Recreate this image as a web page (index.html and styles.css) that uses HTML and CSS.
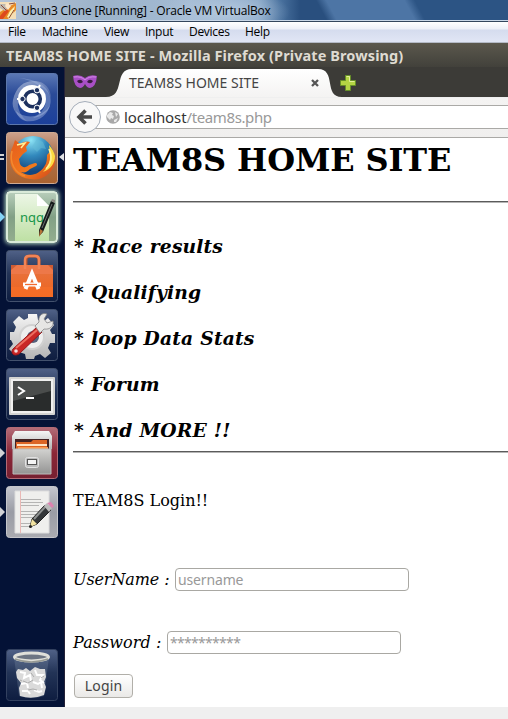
FILE: index.html
```html
<!DOCTYPE html>
<html lang="en">
<head>
<meta charset="utf-8">
<title>TEAM8S HOME SITE</title>
<link rel="stylesheet" href="styles.css">
</head>
<body>
<header class="vm-title">
  <svg class="vm-icon" width="16" height="17" viewBox="0 0 16 17"><rect width="16" height="17" fill="#f4dfb8"/><path d="M0 17V10L8 5l8-4v7L8 17z" fill="#e88a25"/><path d="M0 14l6-7 3 2-6 8H0z" fill="#dd491c"/><path d="M7 15l3-6 5-5-2 8-4 4z" fill="#fff0ad"/><path d="M0 2h5l3 4-3 3-5-3z" fill="#bdb8ae"/><path d="M1 3l5 5M9 2l6-1M14 8l-5 8" stroke="#8a4937" fill="none"/><path d="M7 1l4 3-3 4-3-4z" fill="#ffe7c7"/></svg>
  <span class="vm-name">Ubun3 Clone [Running] - Oracle VM VirtualBox</span>
</header>
<nav class="vm-menu"><span class="m-file">File</span><span class="m-machine">Machine</span><span class="m-view">View</span><span class="m-input">Input</span><span class="m-devices">Devices</span><span class="m-help">Help</span></nav>
<div class="window-title"><span>TEAM8S HOME SITE - Mozilla Firefox (Private Browsing)</span></div>
<div class="desktop">
  <aside class="launcher">
    <svg width="0" height="0" class="defs"><defs>
      <linearGradient id="navy" x2="0" y2="1"><stop stop-color="#506187"/><stop offset=".45" stop-color="#233457"/><stop offset="1" stop-color="#0e1d40"/></linearGradient>
      <linearGradient id="blue" x2="0" y2="1"><stop stop-color="#5c79b6"/><stop offset=".4" stop-color="#2b4b98"/><stop offset="1" stop-color="#1c409b"/></linearGradient>
      <linearGradient id="brown" x2="0" y2="1"><stop stop-color="#cda18c"/><stop offset=".4" stop-color="#ae7450"/><stop offset="1" stop-color="#a9622f"/></linearGradient>
      <linearGradient id="green" x2="0" y2="1"><stop stop-color="#b8cebb"/><stop offset=".5" stop-color="#81a085"/><stop offset="1" stop-color="#93ae8e"/></linearGradient>
      <linearGradient id="red" x2="0" y2="1"><stop stop-color="#b36c78"/><stop offset=".5" stop-color="#8c2637"/><stop offset="1" stop-color="#762031"/></linearGradient>
      <linearGradient id="gray" x2="0" y2="1"><stop stop-color="#c4c6ce"/><stop offset=".5" stop-color="#9a9ca5"/><stop offset="1" stop-color="#aaabb1"/></linearGradient>
      <linearGradient id="paper" x2="0" y2="1"><stop stop-color="#ecf6e6"/><stop offset="1" stop-color="#bee0a4"/></linearGradient>
      <linearGradient id="bag" x2="0" y2="1"><stop stop-color="#e77443"/><stop offset="1" stop-color="#ed641e"/></linearGradient>
      <linearGradient id="steel" x2="0" y2="1"><stop stop-color="#f5f5f5"/><stop offset="1" stop-color="#b4b4b4"/></linearGradient>
      <linearGradient id="drawer" x2="0" y2="1"><stop stop-color="#d2d2d0"/><stop offset="1" stop-color="#949493"/></linearGradient>
      <radialGradient id="globe" cx=".45" cy=".1" r=".75"><stop stop-color="#8de4f5"/><stop offset=".5" stop-color="#3289bd"/><stop offset="1" stop-color="#16467d"/></radialGradient>
      <linearGradient id="fox" x2="1" y2="1"><stop stop-color="#e55b1d"/><stop offset=".6" stop-color="#f27a1c"/><stop offset="1" stop-color="#cc411c"/></linearGradient>
      <linearGradient id="swirl" x2="1" y2="1"><stop stop-color="#fff" stop-opacity=".6"/><stop offset="1" stop-color="#fff" stop-opacity=".03"/></linearGradient>
    </defs></svg>
    <div class="tile"><svg viewBox="0 0 52 52"><rect x=".5" y=".5" width="51" height="51" rx="3" fill="url(#blue)" stroke="#5c77ac"/><path d="M7 27C10 13 19 7 30 8c9 1 15 8 15 17-4-9-12-14-21-12C16 15 12 20 12 29c-1 8 4 15 10 20C11 44 5 36 7 27z" fill="url(#swirl)" opacity=".7"/><path d="M13 5c14 1 27 5 31 18 3 11-4 20-17 22 9-5 13-11 13-19C39 14 27 7 13 5z" fill="#9cb2dd" opacity=".45"/><path d="M10 38c8 8 26 8 34-6-2 10-12 18-24 16-5-1-9-5-10-10z" fill="#b5c4e5" opacity=".4"/><circle cx="26" cy="26" r="14" fill="#fff"/><circle cx="26.500" cy="26" r="7.800" fill="none" stroke="#1d315f" stroke-width="3.600"/><path d="M18 26h-7M30 19l4-7M30 33l4 7" stroke="#fff" stroke-width="2"/><g fill="#1d315f" stroke="#fff"><circle cx="16.500" cy="26" r="2.700"/><circle cx="31" cy="17.200" r="2.700"/><circle cx="31" cy="34.800" r="2.700"/></g></svg></div>
    <div class="tile"><svg viewBox="0 0 52 52"><rect x=".5" y=".5" width="51" height="51" rx="3" fill="url(#brown)" stroke="#cfaa92"/><circle cx="27" cy="25" r="21" fill="url(#globe)"/><path d="M31 7l6 3 3 7-5-1-4 4-5-5z" fill="#66bdd7" opacity=".5"/><path d="M7 14l2-6 5 4c4-3 8-3 10-2l-4 5 1 4-4 3-4 5 1 5c2 4 6 4 9 1l6-2c2 0 3 2 1 3l-6 3c-3 3-5 4-9 3 9 6 18 2 23-5 3-4 3-8 3-12l5-6 1 4c3 6 2 10 1 13C44 43 35 49 24 47 12 46 4 37 4 27c0-6 1-9 3-13z" fill="url(#fox)"/><path d="M41 14c5 9 4 18-4 26 8-3 12-9 12-16-1-4-3-8-6-11l1 8z" fill="#ffdb42"/><path d="M43 17c4 9 2 15-3 20M11 13l8-2-4 5" fill="none" stroke="#fff097" stroke-width="1.500"/><path d="M6 19c-3 12 3 22 13 25" stroke="#f18a31" stroke-width="1.500" fill="none"/></svg><i class="pip pip-up"></i><i class="pip pip-down"></i><i class="active-arrow"></i></div>
    <div class="tile glow"><svg viewBox="0 0 52 52"><rect x="1" y="1" width="50" height="50" rx="3" fill="url(#green)" stroke="#d9ead9" stroke-width="2"/><path d="M9 3h22l12 12v35H9z" fill="url(#paper)"/><path d="M31 3v12h12z" fill="#fff"/><text x="14" y="31" class="note-text">nqq</text><path d="M45 10l4 2-12 29-4 4 0-6z" fill="#161b1b"/><path d="M45 10l1-2 3 1v3z" fill="#8b8781"/><path d="M34 38l3 2-4 6z" fill="#b67538"/><path d="M46 13L36 37" stroke="#6b706e"/></svg><i class="run-arrow blue-arrow"></i></div>
    <div class="tile"><svg viewBox="0 0 52 52"><rect x=".5" y=".5" width="51" height="51" rx="3" fill="url(#navy)" stroke="#43516d"/><path d="M20 19V10q0-4 4-4h5q4 0 4 4v9" fill="none" stroke="#b6532f" stroke-width="3"/><path d="M5 15h42v32H5z" fill="url(#bag)"/><path d="M5 15h42v6H5z" fill="#ce5c34"/><path d="M5 20l6-5h31l5 5v4H5z" fill="#ed7849"/><path d="M19 19V10q0-4 4-4h6q4 0 4 4v9" fill="none" stroke="#f18455" stroke-width="2.500"/><path d="M5 37h42v10H5z" fill="#fa712a" opacity=".55"/><path d="M19.500 39L26 23.500 32.500 39" fill="none" stroke="#fff" stroke-width="4"/><path d="M17 34.500h18" stroke="#fff" stroke-width="4"/><path d="M19 34.500h12" stroke="#f26b30" stroke-width="1.300"/></svg></div>
    <div class="tile"><svg viewBox="0 0 52 52"><rect x=".5" y=".5" width="51" height="51" rx="3" fill="url(#navy)" stroke="#43516d"/><path d="M22 5h9l1 6 5 2 5-4 6 7-4 5 2 4h3v9h-5l-2 5 3 5-6 5-5-4-5 2-1 3h-8l-1-5-6-2-4 3-6-6 4-5-2-4H4v-8h4l2-5-3-5 6-6 5 4 4-2z" fill="url(#steel)"/><circle cx="26" cy="28" r="12" fill="#eee" stroke="#d1d1d1" stroke-width="2"/><circle cx="27" cy="28" r="6" fill="#55617b"/><path d="M7 40L31 18l5 5L13 45c-5 3-9-1-6-5z" fill="#c92726" stroke="#98161a"/><path d="M10 39l21-18" stroke="#ed6e60" stroke-width="2"/><circle cx="10" cy="42" r="1.800" fill="#f6dddd"/><path d="M29 17l4-4c-1-6 3-10 8-8l-3 5 3 4 6-2c1 5-3 9-9 8l-4 4z" fill="#e6e6e4" stroke="#888" stroke-width=".8"/></svg></div>
    <div class="tile"><svg viewBox="0 0 52 52"><rect x=".5" y=".5" width="51" height="51" rx="3" fill="url(#navy)" stroke="#43516d"/><rect x="3" y="9" width="46" height="38" rx="1" fill="#d4d4d2"/><rect x="5" y="11" width="42" height="34" fill="#f0f0ef"/><rect x="7" y="13" width="38" height="30" fill="#292c2c"/><path d="M7 13h38v10L7 33z" fill="#555857" opacity=".75"/><path d="M12 19l6 4-6 4M20 30h8" fill="none" stroke="#fff" stroke-width="2"/></svg></div>
    <div class="tile"><svg viewBox="0 0 52 52"><rect x=".5" y=".5" width="51" height="51" rx="3" fill="url(#red)" stroke="#b26a75"/><path d="M9 4h34l3 5v13H6V9z" fill="url(#steel)"/><path d="M9 12h34v12H9z" fill="#432222"/><path d="M10 15h15l2-2h14v10H10z" fill="#dc6526"/><path d="M11 18h30" stroke="#ffe3c5" stroke-width="2"/><path d="M12 21h30" stroke="#fb984d" stroke-width="2"/><path d="M7 22h38v25H7z" fill="url(#drawer)" stroke="#bbb"/><rect x="19.500" y="30.500" width="13" height="10" rx="2" fill="#bbb" stroke="#e2e2e2"/><rect x="21.500" y="32.500" width="9" height="5" fill="#f4f4f4" stroke="#555"/></svg><i class="run-arrow"></i></div>
    <div class="tile"><svg viewBox="0 0 52 52"><rect x=".5" y=".5" width="51" height="51" rx="3" fill="url(#gray)" stroke="#c5c6cb"/><path d="M9 5h34v42H9z" fill="#efefed" stroke="#ddd"/><path d="M14.500 5v42" stroke="#e9b8b5"/><path d="M15 13.500h20M15 16.500h22M15 19.500h18M15 25.500h21M15 28.500h19M15 31.500h16M15 37.500h10M15 40.500h8" stroke="#b4b4b3"/><path d="M24 41l2-8 13-14 6 5-14 14z" fill="#333638" stroke="#222"/><path d="M28 33l12-13" stroke="#8e9190" stroke-width="2"/><path d="M24 41l2-8 5 5z" fill="#f2e3a1"/><circle cx="24.500" cy="40.500" r="1.500" fill="#222"/><path d="M38 20l3-3 5 5-3 4z" fill="#bbb"/><path d="M41 17l4-1 3 4-2 2z" fill="#dc82b0"/></svg><i class="run-arrow"></i></div>
    <div class="tile trash"><svg viewBox="0 0 52 52"><rect x=".5" y=".5" width="51" height="51" rx="3" fill="url(#navy)" stroke="#33415f"/><path d="M8 8h35l-5 39q-12 4-25 0z" fill="#8192aa" opacity=".28"/><path d="M12 20l5 1 3-2 4 3 5-4 5 2 5 0 1 8-2 5 2 5-2 8q-12 5-24 1l-1-8 2-5-4-5-1-6z" fill="#dadada"/><path d="M14 23l5 1-1 5 6-3 1 6M29 21l2 5 6 0-3 5 4 3M15 35l6-1 1 5M27 33l5 2 3-2 1 6M16 42l6 0 2 3M28 41l5 2 3-1" stroke="#fff" stroke-width="2" fill="none"/><path d="M17 32l5 2 5-3M14 31l2 1M22 41l5-1 4 1M25 24l3 4M35 29l3-2" stroke="#acacac" fill="none"/><ellipse cx="25.500" cy="8" rx="17" ry="4" fill="#6d7583" stroke="#e0e0da" stroke-width="3"/><path d="M9 10q16 6 33 0" fill="none" stroke="#969993" stroke-width="1.500"/></svg></div>
  </aside>
  <main class="browser">
    <div class="tabs">
      <svg class="tab-shape" width="443" height="30" viewBox="0 0 443 30"><defs><linearGradient id="tabfill" x2="0" y2="1"><stop stop-color="#fff"/><stop offset="1" stop-color="#f4f3f2"/></linearGradient></defs><path d="M41 30C61 30 48 2 67 2H253C272 2 258 30 277 30z" fill="url(#tabfill)"/></svg>
      <svg class="mask" width="24" height="14" viewBox="0 0 24 14"><path d="M0 1q7-2 12 2 5-4 12-2-1 11-7 12-3 0-5-4-2 4-5 4Q1 12 0 1z" fill="#a84fc5"/><path d="M4 6q4-3 6 1-4 3-6-1M14 7q2-4 6-1-2 4-6 1" fill="#391c40"/><path d="M1 2q7-1 11 3 4-4 11-3" fill="none" stroke="#d58be8"/></svg>
      <span class="tab-label">TEAM8S HOME SITE</span>
      <svg class="close" width="8" height="8" viewBox="0 0 8 8"><path d="M1 1l6 6M7 1L1 7" stroke="#555" stroke-width="2.300"/></svg>
      <svg class="plus" width="16" height="16" viewBox="0 0 16 16"><path d="M5.500 .5h5v5h5v5h-5v5h-5v-5h-5v-5h5z" fill="#b4d544" stroke="#668f28"/><path d="M6.500 1.500h3v5h5" fill="none" stroke="#e3ef9b"/></svg>
    </div>
    <div class="toolbar">
      <div class="address"><svg width="14" height="14" viewBox="0 0 14 14"><circle cx="7" cy="7" r="6.800" fill="#a8a8a8"/><path d="M1 5l3-3 3 1-1 2 2 1-1 3-2-1-1 2-3-3M9 2l3 2-2 3M8 10l4-2-2 4H8z" fill="#e9e9e9"/></svg><span class="host">localhost</span><span class="path">/team8s.php</span></div>
      <div class="back"><svg width="30" height="30" viewBox="0 0 30 30"><path d="M8.500 15H22M15.500 8.500L9 15l6.500 6.500" fill="none" stroke="#494949" stroke-width="3.600"/></svg></div>
    </div>
    <section class="page">
      <h1>TEAM8S HOME SITE</h1>
      <hr>
      <div class="features"><h3>* Race results</h3><h3>* Qualifying</h3><h3>* loop Data Stats</h3><h3>* Forum</h3><h3>* And MORE !!</h3></div>
      <hr>
      <p>TEAM8S Login!!</p>
      <form>
        <label class="row"><em class="user-label">UserName :</em><input type="text" placeholder="username"></label>
        <label class="row"><em class="pass-label">Password :</em><input class="secret" type="password" placeholder="**********"></label>
        <button type="button">Login</button>
      </form>
    </section>
  </main>
</div>
</body>
</html>
```

FILE: styles.css
```css
* { box-sizing: border-box; }
body { margin: 0; width: 508px; height: 719px; overflow: hidden; background: #efefef; color: #000; }
svg { display: block; flex: none; }
.vm-title { display: flex; height: 22px; border-bottom: 1px solid #34465d; box-shadow: inset 0 -1px #c9d7e7; background: radial-gradient(ellipse 65px 23px at 225px 12px, #b3c8de, transparent), linear-gradient(90deg, #b5c4d6 0, #9cb3ca 100px, #a3bad3 190px, #86a5c6 258px, #4a729f 280px, transparent 300px), linear-gradient(62deg, #294f7e 0 63%, #4d75a5 65% 80%, #2c5484 82%); font: 12px/21px "Open Sans", sans-serif; white-space: nowrap; }
.vm-icon { margin-top: 2px; }
.vm-name { margin-left: 5px; letter-spacing: -.2px; }
.vm-menu { display: flex; height: 21px; padding-left: 8px; background: linear-gradient(#fff, #edf0f8 7px, #d5dcee 8px, #e1e6f5); border-bottom: 1px solid #b4bac6; font: 12px/20px "Open Sans", sans-serif; letter-spacing: -.3px; white-space: nowrap; }
.m-file { width: 34px; }
.m-machine { width: 62px; }
.m-view { width: 41px; }
.m-input { width: 44px; }
.m-devices { width: 56px; }
.window-title { height: 24px; padding-left: 6px; background: linear-gradient(#5b584d, #42413b); color: #dfdbd2; font: bold 14.5px/24px "Noto Sans", sans-serif; letter-spacing: .1px; white-space: nowrap; }
.desktop { display: flex; height: 640px; }
.launcher { display: flex; flex-direction: column; gap: 7px; width: 65px; flex: none; padding: 6px 0 6px 6px; background: #041236; border-right: 1px solid #252238; }
.defs { position: absolute; }
.tile { position: relative; width: 52px; height: 52px; flex: none; }
.trash { margin-top: auto; }
.glow svg { border-radius: 4px; box-shadow: 0 0 4px 1px #b5d8c0; }
.note-text { font: 13px "Noto Sans", sans-serif; fill: #17964a; }
.run-arrow { position: absolute; left: -6px; top: 21px; border: 5px solid transparent; border-left-color: #d1d2d5; border-right: 0; }
.blue-arrow { border-left-color: #84d3f5; }
.pip { position: absolute; left: -6px; width: 4px; height: 2px; background: #d1d2d5; }
.pip-up { top: 22px; }
.pip-down { top: 26px; }
.active-arrow { position: absolute; left: 53px; top: 21px; border: 4px solid transparent; border-right: 5px solid #e0e1e4; border-left: 0; }
.browser { width: 443px; height: 640px; background: #fff; }
.tabs { position: relative; display: flex; height: 30px; background: #3c3b37; }
.tab-shape { position: absolute; left: 0; top: 0; }
.mask { position: relative; margin: 8px 0 0 8px; }
.tab-label { position: relative; width: 182px; margin-left: 32px; font: 14px/32px "Noto Sans", sans-serif; letter-spacing: 0; color: #444; white-space: nowrap; }
.close { position: relative; margin-top: 12px; }
.plus { margin: 8px 0 0 21px; }
.toolbar { position: relative; height: 41px; padding-top: 7px; background: linear-gradient(#f4f3f2, #f0efee); border-top: 1px solid #efefef; border-bottom: 1px solid #aaa9a6; }
.address { display: flex; align-items: center; height: 24px; margin-left: 20px; padding-left: 21px; background: #fff; border: solid #aaa9a6; border-width: 1px 0; font: 15px/24px "Noto Sans", sans-serif; white-space: nowrap; }
.host { margin-left: 4px; color: #333; letter-spacing: -.1px; }
.path { color: #999; letter-spacing: -.38px; }
.back { position: absolute; left: 4px; top: 3px; width: 32px; height: 32px; border: 1px solid #a4adb9; border-radius: 50%; background: #f8f8f8; }
.page { padding: 3px 0 0 8px; font: 16px/19px "DejaVu Serif", serif; }
h1 { margin: 0; font-size: 32px; line-height: 38px; letter-spacing: -.13px; white-space: nowrap; }
hr { height: 2px; margin: 22px 0 0; border: 0; border-top: 1px solid #5b5b5b; border-bottom: 1px solid #b5b5b5; }
.features { padding: 32px 0 0 1px; }
h3 { height: 22px; margin: 0 0 24px; font-size: 18.72px; line-height: 22px; font-style: italic; letter-spacing: .15px; word-spacing: .3px; }
h3:last-child { margin-bottom: 0; }
.features + hr { margin-top: 10px; }
p { margin: 38px 0 58px; }
form { display: block; }
.row { display: flex; align-items: center; height: 23px; margin-bottom: 40px; }
em { white-space: nowrap; }
.user-label { width: 102px; letter-spacing: -.1px; }
.pass-label { width: 94px; letter-spacing: .08px; }
input { width: 234px; height: 23px; margin: 0; padding: 0 2px; border: 1px solid #a9a8a3; border-radius: 4px; outline: 0; background: #fff; font: 14px "Noto Sans", sans-serif; letter-spacing: -.15px; }
.secret { letter-spacing: -.7px; }
input::placeholder { color: #999; opacity: 1; }
button { display: block; width: 59px; height: 24px; margin: -20px 0 0 1px; padding: 0; border: 1px solid #b1afa9; border-radius: 4px; background: linear-gradient(#fff, #eae9e7); color: #444; font: 14px/20px "Noto Sans", sans-serif; letter-spacing: .15px; }
```
